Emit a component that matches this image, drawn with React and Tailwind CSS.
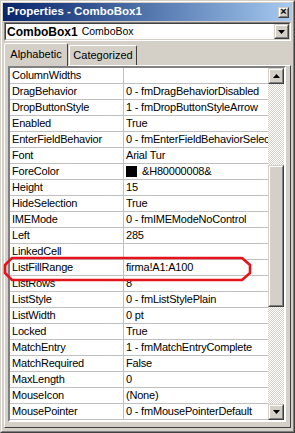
import React from "react";

const rows = [
  ["ColumnWidths", ""],
  ["DragBehavior", "0 - fmDragBehaviorDisabled"],
  ["DropButtonStyle", "1 - fmDropButtonStyleArrow"],
  ["Enabled", "True"],
  ["EnterFieldBehavior", "0 - fmEnterFieldBehaviorSelectAll"],
  ["Font", "Arial Tur"],
  ["ForeColor", "&H80000008&", true],
  ["Height", "15"],
  ["HideSelection", "True"],
  ["IMEMode", "0 - fmIMEModeNoControl"],
  ["Left", "285"],
  ["LinkedCell", ""],
  ["ListFillRange", "firma!A1:A100"],
  ["ListRows", "8"],
  ["ListStyle", "0 - fmListStylePlain"],
  ["ListWidth", "0 pt"],
  ["Locked", "True"],
  ["MatchEntry", "1 - fmMatchEntryComplete"],
  ["MatchRequired", "False"],
  ["MaxLength", "0"],
  ["MouseIcon", "(None)"],
  ["MousePointer", "0 - fmMousePointerDefault"],
];

function Raised({ className = "", children }) {
  return (
    <div className={`border border-t-[#d4d0c8] border-l-[#d4d0c8] border-r-[#404040] border-b-[#404040] bg-[#d4d0c8] ${className}`}>
      <div className="w-full h-full border border-t-white border-l-white border-r-[#808080] border-b-[#808080] flex items-center justify-center">
        {children}
      </div>
    </div>
  );
}

function Tri({ up }) {
  return (
    <svg width="7" height="4" viewBox="0 0 7 4">
      {up ? <path d="M3.5 0 L7 4 L0 4 Z" fill="#000" /> : <path d="M0 0 L7 0 L3.5 4 Z" fill="#000" />}
    </svg>
  );
}

export default function App() {
  return (
    <div
      className="relative w-[295px] h-[433px] bg-[#d4d0c8] border border-t-[#d4d0c8] border-l-[#d4d0c8] border-r-[#404040] border-b-[#404040] text-black"
      style={{ fontFamily: '"Liberation Sans", Arial, sans-serif' }}
    >
      <div className="w-full h-full border border-t-white border-l-white border-r-[#808080] border-b-[#808080] p-[1px] flex flex-col">
        {/* title bar */}
        <div className="h-[18px] flex items-center justify-between pl-[4px] pr-[3px] bg-gradient-to-r from-[#0a246a] to-[#a6caf0]">
          <span className="text-white font-bold text-[11.5px] leading-none">Properties - ComboBox1</span>
          <Raised className="w-[11px] h-[11px]">
            <span className="text-[11px] leading-none font-bold -mt-[1px]">×</span>
          </Raised>
        </div>

        {/* object combo */}
        <div className="mt-[1px] mx-[1px] h-[19px] border border-t-[#808080] border-l-[#808080] border-r-white border-b-white">
          <div className="h-full border border-t-[#404040] border-l-[#404040] border-r-[#d4d0c8] border-b-[#d4d0c8] bg-white flex items-center">
            <span className="pl-[1px] font-bold text-[12px] leading-none">ComboBox1</span>
            <span className="pl-[4px] text-[10.5px] leading-none">ComboBox</span>
            <Raised className="ml-auto w-[15px] h-[15px]">
              <Tri />
            </Raised>
          </div>
        </div>

        {/* tabs */}
        <div className="h-[24px] mx-[1px] flex items-end">
          <div className="relative z-10 -mb-[1px] h-[23px] w-[64px] border border-b-0 border-t-white border-l-white border-r-[#404040] rounded-t-[2px] flex items-center justify-center text-[11px] bg-[#d4d0c8]">
            <span className="-mt-[2px]">Alphabetic</span>
          </div>
          <div className="h-[20px] w-[68px] ml-[1px] border border-b-0 border-t-white border-l-white border-r-[#404040] rounded-t-[2px] flex items-center justify-center text-[11px]">
            Categorized
          </div>
        </div>

        {/* tab page */}
        <div className="flex-1 mx-[1px] mb-[2px] border border-t-white border-l-white border-r-[#404040] border-b-[#404040] pl-[3px] pr-[3px]">
          <div className="border-2 border-t-[#808080] border-l-[#808080] border-r-white border-b-white w-[278px]">
            <div className="flex">
              <div className="w-[258px] bg-white">
                {rows.map(([name, value, swatch]) => (
                  <div key={name} className="h-[16px] flex border-b border-[#c0c0c0] text-[11px] leading-[15px] tracking-[-0.2px]">
                    <div className="w-[114px] border-r border-[#c0c0c0] pl-[2px] whitespace-nowrap overflow-hidden">{name}</div>
                    <div className="flex-1 pl-[2px] whitespace-nowrap overflow-hidden flex items-center">
                      {swatch && <span className="inline-block w-[11px] h-[11px] bg-black mr-[5px]" />}
                      {value}
                    </div>
                  </div>
                ))}
              </div>
              <div className="w-[16px] flex flex-col bg-[repeating-conic-gradient(#d4d0c8_0%_25%,#ffffff_0%_50%)] bg-[length:2px_2px]">
                <Raised className="w-[16px] h-[16px]">
                  <Tri up />
                </Raised>
                <div className="h-[81px]" />
                <Raised className="w-[16px] h-[142px]" />
                <div className="flex-1" />
                <Raised className="w-[16px] h-[16px]">
                  <Tri />
                </Raised>
              </div>
            </div>
          </div>
        </div>
      </div>

      {/* red annotation */}
      <svg className="absolute left-[2px] top-[255px]" width="250" height="26" viewBox="0 0 250 26">
        <path d="M9 2 H239 L247 9 V17 L239 24 H9 L2 17 V9 Z" fill="none" stroke="#e3141c" strokeWidth="2.6" strokeLinejoin="round" />
      </svg>
    </div>
  );
}
